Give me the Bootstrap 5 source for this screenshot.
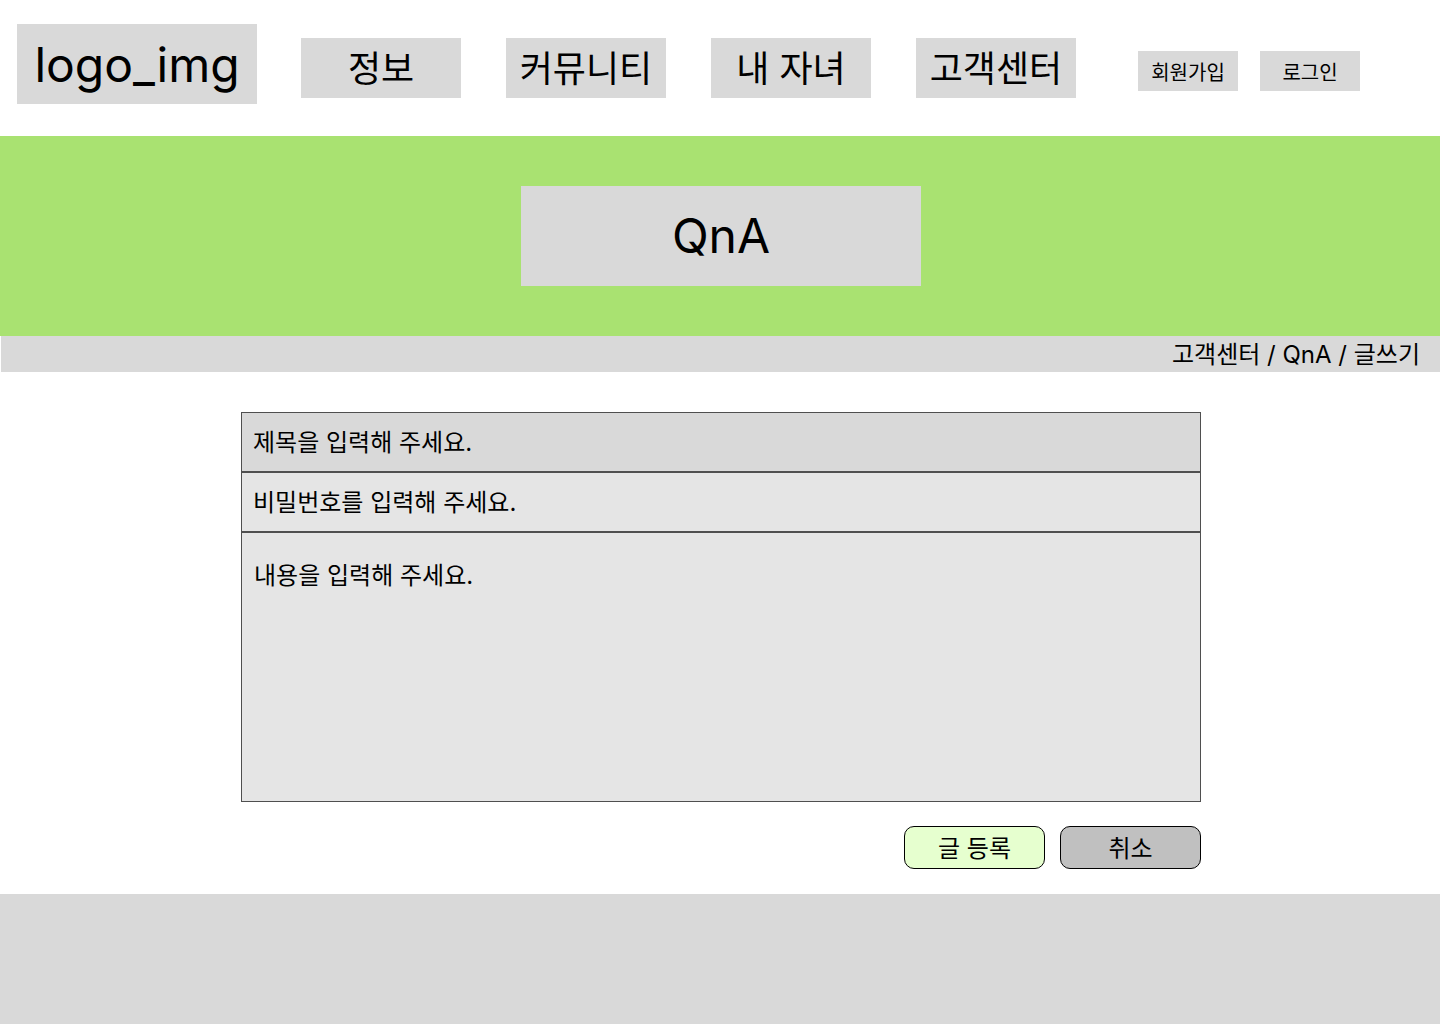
<!DOCTYPE html>
<html lang="ko">
<head>
<meta charset="utf-8">
<meta name="viewport" content="width=device-width, initial-scale=1">
<title>QnA 글쓰기</title>
<link href="https://cdn.jsdelivr.net/npm/bootstrap@5.3.0/dist/css/bootstrap.min.css" rel="stylesheet">
<style>
  body { font-family: Inter, "Noto Sans CJK KR", sans-serif; color: #000; background: #fff; }
  a { color: #000; text-decoration: none; }
  .tile { display: flex; align-items: center; justify-content: center; background: #d9d9d9; white-space: nowrap; }
  .site-head { padding: 24px 16px 32px 17px; column-gap: 44px; }
  .tile-logo { width: 240px; height: 80px; padding-top: 2px; font-size: 48px; }
  .main-menu { gap: 45px; padding-top: 14px; }
  .tile-menu { width: 160px; height: 60px; padding-top: 2px; font-size: 36px; }
  .member-menu { gap: 22px; padding-top: 27px; margin-left: 18px; }
  .tile-member { width: 100px; height: 40px; padding-top: 4px; font-size: 20px; }
  .hero-band { background: #a9e271; padding: 50px 0 50px 2px; }
  .tile-title { width: 400px; height: 100px; font-size: 48px; font-weight: 400; line-height: 1.5; }
  .crumb-bar { background: #d9d9d9; margin-left: 1px; padding: 2px 20px 0 0; font-size: 24px; line-height: 34px; }
  .write-area { padding: 40px 0 25px 2px; }
  .write-form { max-width: 960px; }
  .write-form .form-control { border: 1px solid #4f4f4f; border-radius: 0; background: #e5e5e5; color: #000; font-size: 24px; line-height: 36px; padding: 12px 11px 10px; }
  .write-form .form-control::placeholder { color: #000; opacity: 1; }
  .write-form .field-subject { background: #d9d9d9; }
  .write-form .field-content { height: 270px; padding: 25px 12px; resize: none; }
  .form-actions { gap: 15px; margin-top: 24px; }
  .form-actions .btn { width: 141px; padding: 4px 0 2px; border: 1px solid #000; border-radius: 10px; color: #000; font-size: 24px; line-height: 35px; }
  .btn-submit { background: #e6ffcf; }
  .btn-cancel { background: #c0c0c0; }
  .site-foot { background: #d9d9d9; min-height: 130px; }
</style>
<script src="https://cdn.jsdelivr.net/npm/bootstrap@5.3.0/dist/js/bootstrap.bundle.min.js" defer></script>
</head>
<body class="d-flex flex-column min-vh-100">
  <header class="site-head d-flex flex-wrap align-items-start">
    <a class="tile tile-logo" href="#">logo_img</a>
    <nav class="main-menu d-flex flex-wrap">
      <a class="tile tile-menu" href="#">정보</a>
      <a class="tile tile-menu" href="#">커뮤니티</a>
      <a class="tile tile-menu" href="#">내 자녀</a>
      <a class="tile tile-menu" href="#">고객센터</a>
    </nav>
    <div class="member-menu d-flex">
      <a class="tile tile-member" href="#">회원가입</a>
      <a class="tile tile-member" href="#">로그인</a>
    </div>
  </header>

  <section class="hero-band d-flex justify-content-center">
    <h1 class="tile tile-title mb-0">QnA</h1>
  </section>

  <nav class="crumb-bar text-end" aria-label="breadcrumb">
    <a href="#">고객센터</a> / <a href="#">QnA</a> / <span aria-current="page">글쓰기</span>
  </nav>

  <main class="write-area">
    <form class="write-form mx-auto">
      <input class="form-control field-subject" id="subject" type="text" aria-label="제목" placeholder="제목을 입력해 주세요.">
      <input class="form-control" id="secret" type="password" aria-label="비밀번호" placeholder="비밀번호를 입력해 주세요.">
      <textarea class="form-control field-content" id="content" aria-label="내용" placeholder="내용을 입력해 주세요."></textarea>
      <div class="form-actions d-flex justify-content-end">
        <button class="btn btn-submit" type="submit">글 등록</button>
        <button class="btn btn-cancel" type="button">취소</button>
      </div>
    </form>
  </main>

  <footer class="site-foot flex-grow-1"></footer>
</body>
</html>
